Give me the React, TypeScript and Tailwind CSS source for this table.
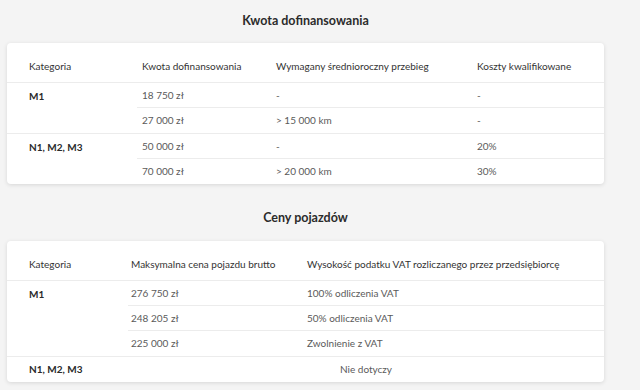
/**
 * Dofinansowanie: two pricing tables (subsidy amounts and vehicle price caps).
 */

const font = { fontFamily: 'Lato, "Open Sans", Arial, sans-serif' };

type SubRow = { cells: string[] };

function GroupRows({
  label,
  rows,
  cols,
  subPad,
  catWidth,
  last,
}: {
  label: string;
  rows: SubRow[];
  cols: string;
  subPad: string;
  catWidth: string;
  last?: boolean;
}) {
  return (
    <div className={`flex ${last ? '' : 'border-b border-[#ececec]'}`}>
      <div className={`${catWidth} shrink-0 pl-[22px] pt-[6px] text-[10px] font-bold text-[#2a2a2a]`}>
        {label}
      </div>
      <div className="flex-1">
        {rows.map((r, i) => (
          <div
            key={i}
            className={`grid ${cols} h-[25px] items-center ${subPad} text-[10px] text-[#5a5a5a] ${
              i < rows.length - 1 ? 'border-b border-[#ececec]' : ''
            }`}
          >
            {r.cells.map((c, j) => (
              <div key={j}>{c}</div>
            ))}
          </div>
        ))}
      </div>
    </div>
  );
}

export default function App() {
  const cols1 = 'grid-cols-[134px_201px_1fr]';
  const cols2 = 'grid-cols-[176px_1fr]';

  return (
    <div className="min-h-[390px] w-[640px] bg-[#f4f4f4] pt-[12px]" style={font}>
      <div className="ml-[7px] w-[597px]">
        <h2 className="text-center text-[12.5px] leading-[17px] font-bold text-[#2b2b2b]">
          Kwota dofinansowania
        </h2>
        <div className="mt-[14px] rounded-[4px] bg-white shadow-[0_1px_4px_rgba(0,0,0,0.12)]">
          <div className="flex h-[40px] items-center border-b border-[#ececec] pt-[8px] text-[10px] text-[#333]">
            <div className="w-[130px] shrink-0 pl-[22px]">Kategoria</div>
            <div className={`grid flex-1 ${cols1} pl-[5px]`}>
              <div>Kwota dofinansowania</div>
              <div>Wymagany średnioroczny przebieg</div>
              <div>Koszty kwalifikowane</div>
            </div>
          </div>
          <GroupRows
            label="M1"
            catWidth="w-[130px]"
            cols={cols1}
            subPad="pl-[5px]"
            rows={[
              { cells: ['18 750 zł', '-', '-'] },
              { cells: ['27 000 zł', '> 15 000 km', '-'] },
            ]}
          />
          <GroupRows
            label="N1, M2, M3"
            catWidth="w-[130px]"
            cols={cols1}
            subPad="pl-[5px]"
            last
            rows={[
              { cells: ['50 000 zł', '-', '20%'] },
              { cells: ['70 000 zł', '> 20 000 km', '30%'] },
            ]}
          />
        </div>

        <h2 className="mt-[25px] text-center text-[12.5px] leading-[17px] font-bold text-[#2b2b2b]">
          Ceny pojazdów
        </h2>
        <div className="mt-[15px] rounded-[4px] bg-white shadow-[0_1px_4px_rgba(0,0,0,0.12)]">
          <div className="flex h-[40px] items-center border-b border-[#ececec] pt-[8px] text-[10px] text-[#333]">
            <div className="w-[121px] shrink-0 pl-[22px]">Kategoria</div>
            <div className={`grid flex-1 ${cols2} pl-[3px]`}>
              <div>Maksymalna cena pojazdu brutto</div>
              <div>Wysokość podatku VAT rozliczanego przez przedsiębiorcę</div>
            </div>
          </div>
          <GroupRows
            label="M1"
            catWidth="w-[121px]"
            cols={cols2}
            subPad="pl-[3px]"
            rows={[
              { cells: ['276 750 zł', '100% odliczenia VAT'] },
              { cells: ['248 205 zł', '50% odliczenia VAT'] },
              { cells: ['225 000 zł', 'Zwolnienie z VAT'] },
            ]}
          />
          <div className="flex h-[25px] items-center">
            <div className="w-[121px] shrink-0 pl-[22px] text-[10px] font-bold text-[#2a2a2a]">N1, M2, M3</div>
            <div className="flex-1 text-center text-[10px] text-[#5a5a5a]">Nie dotyczy</div>
          </div>
        </div>
      </div>
    </div>
  );
}
